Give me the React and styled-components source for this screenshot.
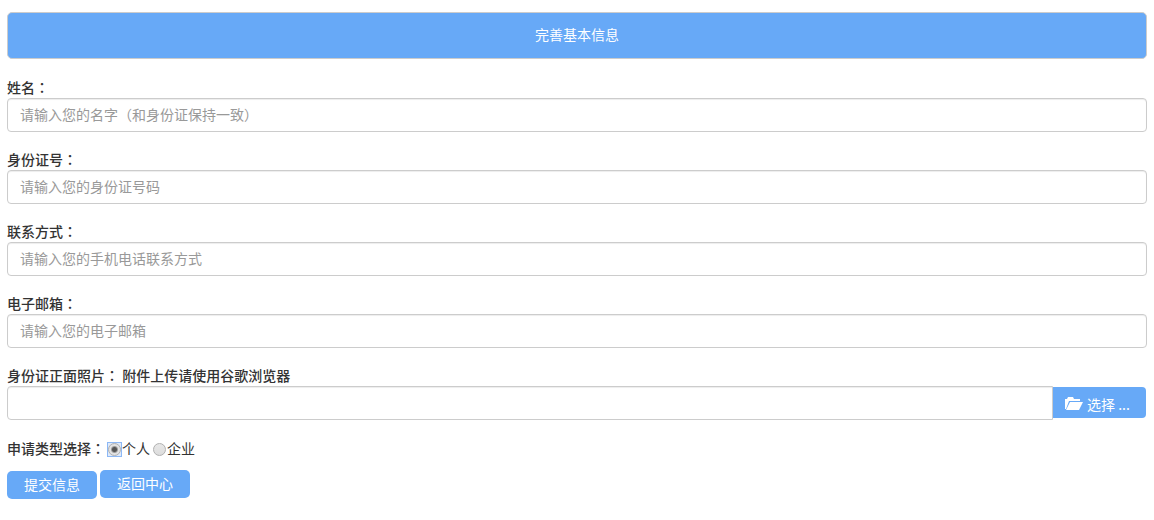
import React from "react";
import styled, { createGlobalStyle } from "styled-components";

const GlobalStyle = createGlobalStyle`
  *, *::before, *::after { box-sizing: border-box; }
  body {
    margin: 0;
    background: #fff;
    color: #333;
    font: 14px/20px "Noto Sans CJK SC", sans-serif;
  }
  input, button { font: inherit; }
`;

const Form = styled.form`
  display: flex;
  flex-direction: column;
  gap: 18px;
  padding: 12px 7px;
`;

const Banner = styled.h1`
  margin: 0 0 1px;
  padding: 11px 12px 13px;
  border: 1px solid #ccc;
  border-radius: 5px;
  background: #67a9f7;
  color: #fff;
  font-size: 14px;
  line-height: 21px;
  font-weight: 400;
  text-align: center;
`;

const Field = styled.div`
  display: flex;
  flex-direction: column;
  gap: 2px;
`;

const Label = styled.label`
  line-height: 18px;
  font-weight: 500;
`;

const Legend = styled.span`
  font-weight: 500;
`;

const Colon = styled.span`
  font-family: "Noto Sans CJK TC", sans-serif;
`;

const TextInput = styled.input`
  flex: 1;
  min-width: 0;
  width: 100%;
  min-height: 34px;
  padding: 5px 12px 7px;
  border: 1px solid #ccc;
  border-radius: ${(p) => (p.$joined ? "4px 0 0 4px" : "4px")};
  background: #fff;
  box-shadow: inset 0 1px 1px rgba(0, 0, 0, 0.075);
  color: #555;
  outline: none;
  &::placeholder { color: #999; opacity: 1; }
`;

const InputGroup = styled.div`
  display: flex;
  align-items: flex-start;
  padding-right: 1px;
`;

const BrowseButton = styled.button`
  display: flex;
  align-items: center;
  gap: 4px;
  margin-top: 1px;
  height: 31px;
  width: 93px;
  padding: 3px 12px 0;
  border: 0;
  border-radius: 0 4px 4px 0;
  background: #67a9f7;
  color: #fff;
  white-space: pre;
  cursor: pointer;
`;

const Choices = styled.div`
  display: flex;
  align-items: center;
  gap: 3px;
`;

const Choice = styled.label`
  display: flex;
  align-items: center;
`;

const RadioFrame = styled.span`
  display: flex;
  margin: 2px 1px 0 0;
  &:has(input:checked) {
    background: #dfeafa;
    outline: 1px solid #8db8f5;
  }
`;

const Radio = styled.input`
  appearance: none;
  width: 13px;
  height: 13px;
  margin: 0;
  border: 1px solid #b0b0b0;
  border-radius: 50%;
  background: linear-gradient(#e8e8e8, #dcdcdc);
  outline: none;
  &:checked {
    background: radial-gradient(circle, #555 0 2px, #e2e2e2 4px);
  }
`;

const Actions = styled.div`
  display: flex;
  align-items: flex-start;
  gap: 3px;
  margin-top: -6px;
`;

const ActionButton = styled.button`
  width: 90px;
  height: 28px;
  margin-top: ${(p) => (p.$lowered ? "1px" : "0")};
  padding: 0 0 2px;
  border: 0;
  border-radius: 5px;
  background: #67a9f7;
  color: #fff;
  cursor: pointer;
`;

const FolderIcon = () => (
  <svg width="18" height="14" viewBox="0 0 18 14" fill="currentColor" aria-hidden="true">
    <path d="M0 12V2h2l1-2h5l1 2h6v2H4L1 12z" />
    <path d="M5 5h13l-4 8H1z" />
  </svg>
);

const fields = [
  { id: "name", label: "姓名", placeholder: "请输入您的名字（和身份证保持一致）" },
  { id: "idNumber", label: "身份证号", placeholder: "请输入您的身份证号码" },
  { id: "phone", label: "联系方式", placeholder: "请输入您的手机电话联系方式" },
  { id: "email", label: "电子邮箱", placeholder: "请输入您的电子邮箱" },
];

export default function App() {
  return (
    <>
      <GlobalStyle />
      <Form lang="zh-CN" onSubmit={(e) => e.preventDefault()}>
        <Banner>完善基本信息</Banner>
        {fields.map((f) => (
          <Field key={f.id}>
            <Label htmlFor={f.id}>
              {f.label}
              <Colon lang="zh-TW">：</Colon>
            </Label>
            <TextInput id={f.id} placeholder={f.placeholder} />
          </Field>
        ))}
        <Field>
          <Label htmlFor="photo">
            身份证正面照片<Colon lang="zh-TW">：</Colon> 附件上传请使用谷歌浏览器
          </Label>
          <InputGroup>
            <TextInput id="photo" readOnly $joined />
            <BrowseButton type="button">
              <FolderIcon />
              选择 ...
            </BrowseButton>
          </InputGroup>
        </Field>
        <Choices role="radiogroup" aria-labelledby="type-label">
          <Legend id="type-label">
            申请类型选择<Colon lang="zh-TW">：</Colon>
          </Legend>
          <Choice>
            <RadioFrame>
              <Radio type="radio" name="type" value="personal" defaultChecked />
            </RadioFrame>
            个人
          </Choice>
          <Choice>
            <RadioFrame>
              <Radio type="radio" name="type" value="company" />
            </RadioFrame>
            企业
          </Choice>
        </Choices>
        <Actions>
          <ActionButton type="submit" $lowered>提交信息</ActionButton>
          <ActionButton type="button">返回中心</ActionButton>
        </Actions>
      </Form>
    </>
  );
}
